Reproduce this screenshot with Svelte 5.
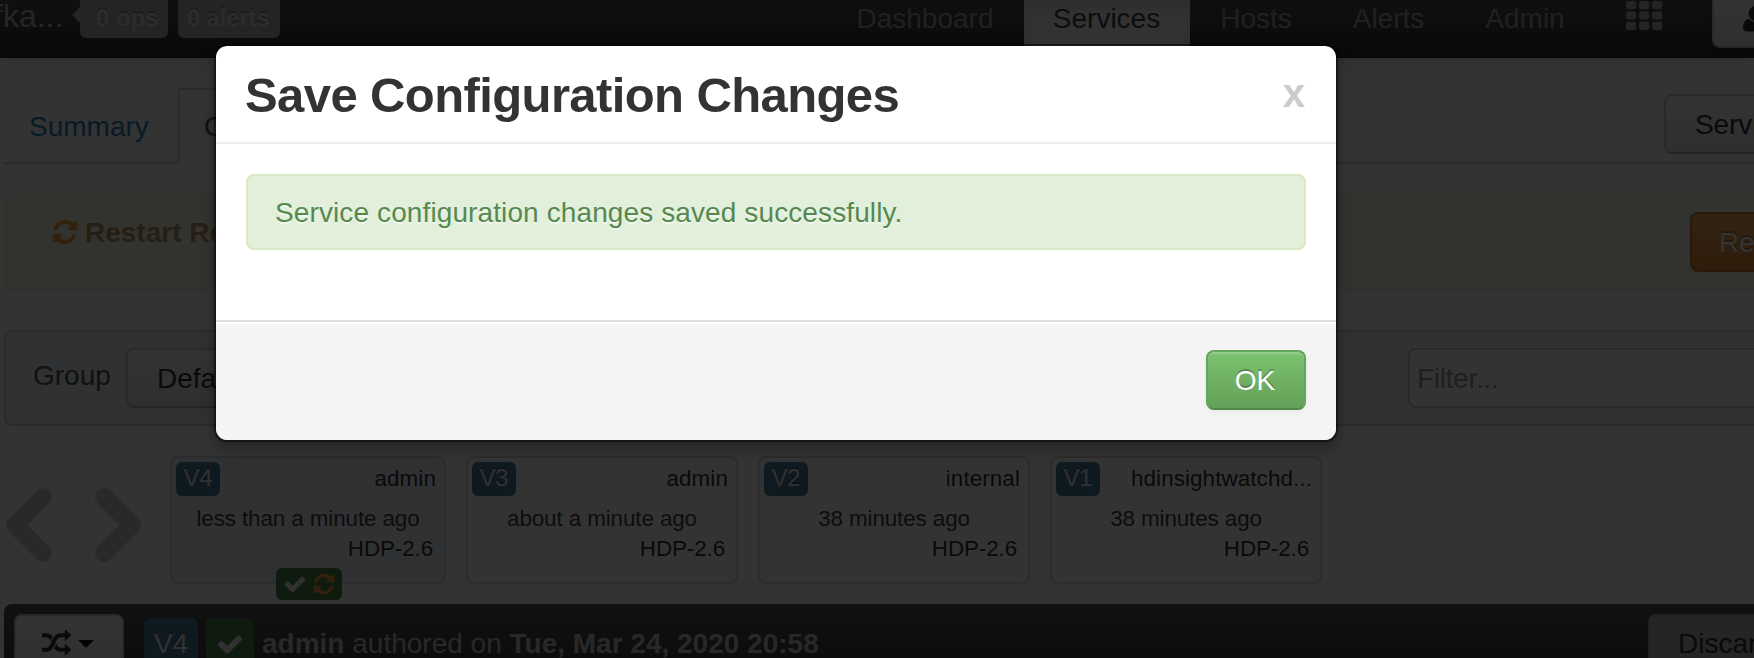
<script>
  const refresh =
    'M1639 1056q0 5-1 7-64 268-268 434.5t-478 166.5q-146 0-282.5-55t-243.5-157l-129 129q-19 19-45 19t-45-19-19-45v-448q0-26 19-45t45-19h448q26 0 45 19t19 45-19 45l-137 137q71 66 161 102t187 36q134 0 250-65t186-179q11-17 53-117 8-23 30-23h192q13 0 22.5 9.5t9.5 22.5zm25-800v448q0 26-19 45t-45 19h-448q-26 0-45-19t-19-45 19-45l138-138q-148-137-349-137-134 0-250 65t-186 179q-11 17-53 117-8 23-30 23h-199q-13 0-22.5-9.5t-9.5-22.5v-7q65-268 270-434.5t480-166.5q146 0 284 55.5t245 156.5l130-129q19-19 45-19t45 19 19 45z';
  const check =
    'M1671 566q0 40-28 68l-724 724-136 136q-28 28-68 28t-68-28l-136-136-362-362q-28-28-28-68t28-68l136-136q28-28 68-28t68 28l294 295 656-657q28-28 68-28t68 28l136 136q28 28 28 68z';
  const random =
    'M666 481q-60 92-137 273-22-45-37-72.5t-40.5-63.5-51-56.5-63-35-81.5-14.5h-224q-14 0-23-9t-9-23v-192q0-14 9-23t23-9h224q250 0 410 225zm1126 799q0 14-9 23l-320 320q-9 9-23 9-13 0-22.5-9.5t-9.5-22.5v-192q-32 0-85 .5t-81 1-73-1-71-5-64-10.5-63-18.5-58-28.5-59-40-55-53.5-56-69.5q59-93 136-273 22 45 37 72.5t40.5 63.5 51 56.5 63 35 81.5 14.5h256v-192q0-14 9-23t23-9q12 0 24 10l319 319q9 9 9 23zm0-896q0 14-9 23l-320 320q-9 9-23 9-13 0-22.5-9.5t-9.5-22.5v-192h-256q-48 0-87 15t-69 45-51 61.5-45 77.5q-32 62-78 171-29 66-49.5 111t-54 105-64 100-74 83-90 68.5-106.5 42-128 16.5h-224q-14 0-23-9t-9-23v-192q0-14 9-23t23-9h224q48 0 87-15t69-45 51-61.5 45-77.5q32-62 78-171 29-66 49.5-111t54-105 64-100 74-83 90-68.5 106.5-42 128-16.5h256v-192q0-14 9-23t23-9q12 0 24 10l319 319q9 9 9 23z';

  const links = [
    { name: 'Dashboard', width: 197 },
    { name: 'Services', width: 166 },
    { name: 'Hosts', width: 133 },
    { name: 'Alerts', width: 132 },
    { name: 'Admin', width: 141 }
  ];
  const versions = [
    { id: 'V4', author: 'admin', when: 'less than a minute ago', current: true },
    { id: 'V3', author: 'admin', when: 'about a minute ago' },
    { id: 'V2', author: 'internal', when: '38 minutes ago' },
    { id: 'V1', author: 'hdinsightwatchd...', when: '38 minutes ago' }
  ];
  const cells = [0, 1, 2].flatMap((r) => [0, 1, 2].map((c) => ({ x: c * 13, y: r * 10.4 })));
</script>

{#snippet icon(path, size)}
  <svg class="icon" width={size} height={size} viewBox="0 0 1792 1792"><path d={path} fill="currentColor" /></svg>
{/snippet}

<div class="page">
  <nav class="navbar">
    <span class="brand">fka...</span>
    <span class="pill ops">0 ops</span>
    <span class="pill alerts">0 alerts</span>
    <div class="links">
      {#each links as link}
        <a class="link" class:active={link.name === 'Services'} style:width="{link.width}px">{link.name}</a>
      {/each}
      <a class="link views">
        <svg width="37" height="30" viewBox="0 0 37 30">
          {#each cells as c}
            <rect x={c.x} y={c.y} width="10.2" height="8.2" rx="2.2" fill="currentColor" />
          {/each}
        </svg>
      </a>
      <button class="btn user">
        <svg width="26" height="26" viewBox="0 0 26 26">
          <circle cx="13" cy="7.5" r="7.4" fill="currentColor" />
          <path d="M6 13C2 13.500 0 17 0 21.500C0 24 1.500 25.500 4 25.500H22C24.500 25.500 26 24 26 21.500C26 17 24 13.500 20 13C16 17 10 17 6 13Z" fill="currentColor" />
        </svg>
      </button>
    </div>
  </nav>

  <main>
    <div class="tabs">
      <a class="tab">Summary</a>
      <a class="tab current">Configs</a>
      <button class="btn actions">Service Actions</button>
    </div>

    <section class="restart">
      <div class="notice">{@render icon(refresh, 28)}<strong>Restart Required:</strong></div>
      <button class="btn orange">Restart</button>
    </section>

    <section class="group">
      <span class="label">Group</span>
      <button class="btn">Default (4)</button>
      <input placeholder="Filter..." />
    </section>

    <section class="history">
      <svg class="arrows" width="148" height="76" viewBox="0 0 148 76" fill="none" stroke="currentColor" stroke-width="18" stroke-linecap="round" stroke-linejoin="round">
        <path d="M39 10 11 38 39 66M100 10 128 38 100 66" />
      </svg>
      {#each versions as v}
        <article class="card" class:current={v.current}>
          <header><span class="badge">{v.id}</span><span class="author">{v.author}</span></header>
          <p class="when">{v.when}</p>
          <p class="stack">HDP-2.6</p>
          {#if v.current}
            <span class="status">{@render icon(check, 24)}<span class="pending">{@render icon(refresh, 24)}</span></span>
          {/if}
        </article>
      {/each}
    </section>

    <section class="bar">
      <button class="btn compare">{@render icon(random, 29)}<i class="caret"></i></button>
      <span class="tag blue">V4</span>
      <span class="tag green">{@render icon(check, 28)}</span>
      <span class="authored"><b>admin</b> authored on <b>Tue, Mar 24, 2020 20:58</b></span>
      <button class="btn discard">Discard</button>
    </section>
  </main>

  <div class="backdrop">
    <div class="modal">
      <div class="modal-header">
        <h3>Save Configuration Changes</h3>
        <button class="close">x</button>
      </div>
      <div class="modal-body">
        <div class="success">Service configuration changes saved successfully.</div>
      </div>
      <div class="modal-footer"><button class="btn ok">OK</button></div>
    </div>
  </div>
</div>

<style>
  :global(body) { margin: 0; overflow: hidden; }
  .page {
    position: relative;
    width: 1754px;
    height: 658px;
    overflow: hidden;
    box-sizing: border-box;
    background: #fff;
    color: #333;
    font: 28px/40px "Liberation Sans", Arial, sans-serif;
  }
  .page * { box-sizing: border-box; }
  .icon { display: block; flex: none; }

  .navbar {
    display: flex;
    height: 58px;
    background: linear-gradient(#4e4e4e, #2c2c2c);
    box-shadow: 0 2px 20px rgba(0, 0, 0, 0.12);
    white-space: nowrap;
  }
  .brand { width: 80px; flex: none; margin-left: -6px; font-size: 32px; line-height: 33px; color: #bbb; }
  .pill {
    position: relative;
    height: 38px;
    flex: none;
    padding: 0 10px;
    border-radius: 0 0 6px 6px;
    background: #b4b4b4;
    color: #dadada;
    font-size: 24px;
    line-height: 36px;
    font-weight: bold;
    text-shadow: 0 -2px 0 rgba(0, 0, 0, 0.25);
  }
  .ops { width: 88px; margin-left: 6px; margin-right: 10px; padding-left: 16px; }
  .ops::before {
    content: "";
    position: absolute;
    left: -8px;
    top: 7px;
    border: solid transparent;
    border-width: 8px 8px 8px 0;
    border-right-color: #b4b4b4;
  }
  .alerts { width: 102px; padding-left: 9px; letter-spacing: -0.2px; }
  .links { display: flex; flex: none; margin-left: auto; margin-right: -42px; }
  .link { height: 58px; flex: none; line-height: 37px; color: #a2a2a2; text-align: center; text-indent: -1px; }
  .link.active { background: #fbfbfb; color: #444; box-shadow: inset 0 6px 16px rgba(0, 0, 0, 0.12); }
  .views { width: 96px; padding: 1px 0 0 30px; color: #b4b4b4; }
  .views svg { display: block; }
  .user { width: 84px; height: 60px; margin: -12px 0 0 20px; padding: 15px 28px; color: #333; }
  .user svg { display: block; }

  .btn {
    display: block;
    height: 60px;
    flex: none;
    padding: 9px 29px 7px;
    border: 2px solid #ccc;
    border-bottom-color: #b9b9b9;
    border-radius: 8px;
    background: linear-gradient(#fff, #e8e8e8);
    box-shadow: 0 2px 4px rgba(0, 0, 0, 0.05);
    color: #333;
    font: inherit;
    white-space: nowrap;
  }

  main { padding: 30px 0 0 4px; }
  .tabs { display: flex; height: 76px; margin-right: -60px; border-bottom: 2px solid #d6d6d6; }
  .tab { height: 76px; padding: 19px 25px 0; color: #2b81bd; }
  .tab:first-child { width: 174px; }
  .tab.current { border: 2px solid #d6d6d6; border-bottom-color: #fff; padding: 17px 24px 0; color: #555; background: #fff; }
  .actions { width: 150px; margin: 6px 0 0 auto; padding: 9px 29px 7px; overflow: hidden; text-align: left; letter-spacing: -0.1px; }

  .restart {
    display: flex;
    justify-content: space-between;
    height: 96px;
    margin: 30px -60px 0 0;
    padding: 16px 0 0 46px;
    border: 2px solid #f8eeda;
    border-radius: 8px;
    background: #fbf9e6;
    color: #c09853;
  }
  .notice { display: flex; align-items: center; height: 44px; gap: 6px; margin-top: -2px; color: #f5a233; }
  .notice .icon { margin-left: -1px; }
  .notice strong { color: #c09862; padding-top: 2px; }
  .orange {
    width: 122px;
    padding-left: 27px;
    overflow: hidden;
    text-align: left;
    border-color: #c98035;
    background: linear-gradient(#f6b062, #e88a35);
    color: #fff;
    text-shadow: 0 -2px 0 rgba(0, 0, 0, 0.25);
  }

  .group {
    display: flex;
    height: 96px;
    margin: 40px -60px 0 0;
    padding: 16px 0 0 27px;
    border: 2px solid #d5d8dc;
    border-radius: 8px;
    background: #edf2f7;
  }
  .label { width: 93px; padding-top: 8px; color: #555; }
  input {
    width: 404px;
    height: 60px;
    margin-left: auto;
    padding: 9px 7px 7px;
    border: 2px solid #ccc;
    border-radius: 8px;
    background: #fff;
    font: inherit;
    letter-spacing: -0.3px;
  }
  input::placeholder { color: #999; opacity: 1; }

  .history { display: flex; gap: 20px; height: 178px; padding-top: 30px; }
  .arrows { flex: none; margin: 31px -2px 0 0; color: #ccced2; }
  .card {
    position: relative;
    width: 272px;
    height: 128px;
    border: 2px solid #dadada;
    border-radius: 8px;
    font-size: 22.4px;
    letter-spacing: -0.1px;
  }
  .card.current { width: 276px; background: #edf2f7; border-color: #d5dbe1; }
  .card header { display: flex; justify-content: space-between; height: 44px; padding: 4px 8px 0 4px; line-height: 34px; }
  .author { letter-spacing: 0.1px; }
  .badge {
    width: 44px;
    height: 34px;
    border-radius: 6px;
    background: #4a819f;
    color: #f4f4f4;
    font-size: 23.6px;
    line-height: 32px;
    text-align: center;
    text-shadow: 0 -2px 0 rgba(0, 0, 0, 0.25);
  }
  .card p { margin: 0; line-height: 30px; }
  .when { padding-top: 2px; text-align: center; color: #444; }
  .stack { padding-right: 11px; text-align: right; color: #333; }
  .status {
    position: absolute;
    left: 104px;
    top: 110px;
    display: flex;
    align-items: center;
    gap: 5px;
    width: 66px;
    height: 32px;
    padding-left: 7px;
    border-radius: 6px;
    background: #4b864b;
    color: #f4f4f4;
  }
  .pending { color: #f5a233; }

  .bar {
    display: flex;
    height: 80px;
    margin-right: -60px;
    padding: 10px 0 0 10px;
    border-radius: 8px 0 0 0;
    background: linear-gradient(#555, #333);
    white-space: nowrap;
  }
  .compare { display: flex; align-items: center; gap: 7px; width: 110px; padding: 0 0 2px 26px; }
  .caret { border: 8px solid transparent; border-top-color: #111; border-bottom: 0; margin-top: 2px; }
  .tag {
    width: 54px;
    height: 56px;
    flex: none;
    margin: 4px 0 0 20px;
    border-radius: 6px;
    color: #f4f4f4;
    line-height: 52px;
    text-align: center;
    text-shadow: 0 -2px 0 rgba(0, 0, 0, 0.25);
  }
  .blue { background: #4a819f; }
  .green { width: 48px; margin-left: 8px; padding: 12px 10px; background: #4b864b; }
  .authored { margin-left: 8px; line-height: 60px; color: #c8c8c8; }
  .discard { width: 166px; margin-left: auto; padding: 8px 28px; text-align: left; background: #b8b8b8; border-color: #aaa; }

  .backdrop { position: absolute; inset: 0; padding: 44px 0 0 214px; background: rgba(0, 0, 0, 0.8); }
  .modal {
    width: 1124px;
    border: 2px solid rgba(0, 0, 0, 0.5);
    border-radius: 13px;
    background: #fff;
    background-clip: padding-box;
    box-shadow: 0 6px 14px rgba(0, 0, 0, 0.3);
  }
  .modal-header {
    display: flex;
    justify-content: space-between;
    height: 98px;
    padding: 19px 31px 0 29px;
    border-bottom: 2px solid #eee;
  }
  h3 { margin: 0; font-size: 49px; line-height: 61px; letter-spacing: -0.6px; color: #333; }
  .close { align-self: flex-start; padding: 0; border: 0; background: none; color: #ccc; font: bold 40px/56px "Liberation Sans", Arial, sans-serif; }
  .modal-body { height: 176px; padding: 30px; }
  .success {
    height: 76px;
    padding: 17px 27px;
    border: 2px solid #d9e8c8;
    border-radius: 8px;
    background: #e2efdb;
    color: #56894f;
    letter-spacing: 0.11px;
    text-shadow: 0 2px 0 rgba(255, 255, 255, 0.5);
  }
  .modal-footer {
    display: flex;
    justify-content: flex-end;
    height: 120px;
    padding: 28px 30px;
    border-top: 2px solid #ddd;
    border-radius: 0 0 12px 12px;
    background: #f4f4f4;
    box-shadow: inset 0 2px 0 #fff;
  }
  .ok {
    width: 100px;
    padding: 9px 0 7px;
    text-indent: -2px;
    border-color: #62a75b;
    border-bottom-color: #518b49;
    background: linear-gradient(#7cc270, #64a058);
    color: #fff;
    text-shadow: 0 -2px 0 rgba(0, 0, 0, 0.25);
    box-shadow: inset 0 2px 0 rgba(255, 255, 255, 0.2), 0 2px 4px rgba(0, 0, 0, 0.05);
  }
</style>
